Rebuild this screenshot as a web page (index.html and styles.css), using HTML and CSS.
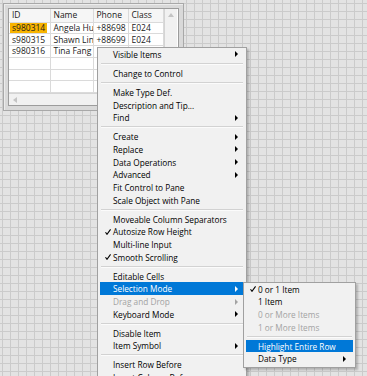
FILE: index.html
```html
<!DOCTYPE html>
<html lang="en">
<head>
  <meta charset="UTF-8" />
  <title>Table Context Menu</title>
  <link rel="stylesheet" href="styles.css">
</head>
<body>
  <div class="panel">
    <div class="table-frame">
      <div class="table-main">
        <table class="grid">
          <colgroup>
            <col class="c-id"><col class="c-name"><col class="c-phone"><col class="c-class">
          </colgroup>
          <thead>
            <tr><th>ID</th><th>Name</th><th>Phone</th><th>Class</th></tr>
          </thead>
          <tbody>
            <tr><td><span class="picked">s980314</span></td><td>Angela Hu</td><td>+88698</td><td>E024</td></tr>
            <tr><td>s980315</td><td>Shawn Lin</td><td>+88699</td><td>E024</td></tr>
            <tr><td>s980316</td><td>Tina Fang</td><td></td><td></td></tr>
            <tr><td></td><td></td><td></td><td></td></tr>
            <tr><td></td><td></td><td></td><td></td></tr>
            <tr><td></td><td></td><td></td><td></td></tr>
          </tbody>
        </table>
        <div class="vscroll"><i class="tri-up"></i></div>
      </div>
      <div class="hscroll"><i class="tri-left"></i></div>
    </div>
  </div>

  <div class="menu main-menu">
    <div class="item sub"><span class="mark"></span><span>Visible Items</span></div>
    <div class="sep"></div>
    <div class="item"><span class="mark"></span><span>Change to Control</span></div>
    <div class="sep"></div>
    <div class="item"><span class="mark"></span><span>Make Type Def.</span></div>
    <div class="item"><span class="mark"></span><span>Description and Tip...</span></div>
    <div class="item sub"><span class="mark"></span><span>Find</span></div>
    <div class="sep"></div>
    <div class="item sub"><span class="mark"></span><span>Create</span></div>
    <div class="item sub"><span class="mark"></span><span>Replace</span></div>
    <div class="item sub"><span class="mark"></span><span>Data Operations</span></div>
    <div class="item sub"><span class="mark"></span><span>Advanced</span></div>
    <div class="item"><span class="mark"></span><span>Fit Control to Pane</span></div>
    <div class="item"><span class="mark"></span><span>Scale Object with Pane</span></div>
    <div class="sep"></div>
    <div class="item"><span class="mark"></span><span>Moveable Column Separators</span></div>
    <div class="item"><span class="mark"><svg viewBox="0 0 6 6" width="6" height="6"><path d="M0.5 3.2 L2 5.3 L5.6 0.4" /></svg></span><span>Autosize Row Height</span></div>
    <div class="item"><span class="mark"></span><span>Multi-line Input</span></div>
    <div class="item"><span class="mark"><svg viewBox="0 0 6 6" width="6" height="6"><path d="M0.5 3.2 L2 5.3 L5.6 0.4" /></svg></span><span>Smooth Scrolling</span></div>
    <div class="sep"></div>
    <div class="item"><span class="mark"></span><span>Editable Cells</span></div>
    <div class="item sub active"><span class="mark"></span><span>Selection Mode</span></div>
    <div class="item sub disabled"><span class="mark"></span><span>Drag and Drop</span></div>
    <div class="item sub"><span class="mark"></span><span>Keyboard Mode</span></div>
    <div class="sep"></div>
    <div class="item"><span class="mark"></span><span>Disable Item</span></div>
    <div class="item sub"><span class="mark"></span><span>Item Symbol</span></div>
    <div class="sep"></div>
    <div class="item"><span class="mark"></span><span>Insert Row Before</span></div>
    <div class="item"><span class="mark"></span><span>Insert Column Before</span></div>
  </div>

  <div class="menu sub-menu">
    <div class="item"><span class="mark"><svg viewBox="0 0 6 6" width="6" height="6"><path d="M0.5 3.2 L2 5.3 L5.6 0.4" /></svg></span><span>0 or 1 Item</span></div>
    <div class="item"><span class="mark"></span><span>1 Item</span></div>
    <div class="item disabled"><span class="mark"></span><span>0 or More Items</span></div>
    <div class="item disabled"><span class="mark"></span><span>1 or More Items</span></div>
    <div class="sep"></div>
    <div class="item active"><span class="mark"></span><span>Highlight Entire Row</span></div>
    <div class="item sub"><span class="mark"></span><span>Data Type</span></div>
  </div>
</body>
</html>
```

FILE: styles.css
```css
html, body {
  margin: 0;
  height: 376px;
  overflow: hidden;
}
body {
  position: relative;
  padding: 3px;
  box-sizing: border-box;
  font-family: "Open Sans", "Liberation Sans", sans-serif;
  font-size: 8.25px;
  color: #111;
  background-color: #e3e3e3;
  background-image:
    linear-gradient(to right, #cbcbcb 1px, transparent 1px),
    linear-gradient(to bottom, #cbcbcb 1px, transparent 1px);
  background-size: 8px 8px;
  background-position: 2px 3px;
}

/* table control */
.panel {
  width: 181px;
  box-sizing: border-box;
  background: #d9d9d9;
  border: 1px solid #a8a8a8;
  padding: 4px;
  box-shadow: inset 1px 1px 0 #ececec;
}
.table-frame {
  border: 1px solid #9c9c9c;
  background: #fff;
}
.table-main {
  display: flex;
}
.grid {
  table-layout: fixed;
  border-collapse: collapse;
  width: 154px;
  font-size: 8.5px;
  color: #1a1a1a;
}
.c-id { width: 41px; }
.c-name { width: 43px; }
.c-phone { width: 35px; }
.c-class { width: 35px; }
.grid th, .grid td {
  padding: 0 0 0 3px;
  border: 1px solid #dadada;
  border-top: none;
  white-space: nowrap;
  overflow: hidden;
  text-align: left;
  font-weight: normal;
  line-height: 10px;
}
.grid th:first-child, .grid td:first-child { border-left: none; }
.grid th {
  height: 12.5px;
  background: #f6f6f6;
}
.grid td {
  height: 10.75px;
}
.picked {
  background: #f8b400;
  margin-left: -2px;
  padding: 1px 2px;
}
.vscroll {
  width: 12px;
  background: #f1f1f1;
  border-left: 1px solid #d4d4d4;
  display: flex;
  justify-content: center;
  padding-top: 4px;
}
.tri-up {
  width: 0;
  height: 0;
  border-left: 3px solid transparent;
  border-right: 3px solid transparent;
  border-bottom: 4px solid #c4c4c4;
}
.hscroll {
  height: 12px;
  background: #f1f1f1;
  border-top: 1px solid #d4d4d4;
  display: flex;
  align-items: center;
  padding-left: 4px;
  box-sizing: border-box;
}
.tri-left {
  width: 0;
  height: 0;
  border-top: 3px solid transparent;
  border-bottom: 3px solid transparent;
  border-right: 4px solid #c4c4c4;
}

/* context menus */
.menu {
  position: absolute;
  background: #f1f1f1;
  border: 1px solid #a0a0a0;
  box-shadow: 2px 2px 2px rgba(0, 0, 0, 0.22);
  box-sizing: border-box;
  color: #000;
}
.main-menu {
  left: 97px;
  top: 47px;
  width: 150px;
}
.sub-menu {
  left: 243px;
  top: 281.7px;
  width: 113px;
  padding-bottom: 2px;
}
.item {
  display: flex;
  align-items: center;
  height: 12.7px;
  margin: 0 2px;
  padding: 0 6px 0 5px;
  white-space: nowrap;
}
.sub-menu .item {
  padding-left: 4px;
  padding-right: 7px;
}
.mark {
  width: 8px;
  flex: none;
  display: flex;
  align-items: center;
}
.mark svg {
  fill: none;
  stroke: #000;
  stroke-width: 1.1;
}
.item.sub::after {
  content: "";
  margin-left: auto;
  width: 0;
  height: 0;
  border-top: 3px solid transparent;
  border-bottom: 3px solid transparent;
  border-left: 3px solid #000;
}
.item.active {
  background: #0078d7;
  color: #fff;
}
.item.active::after {
  border-left-color: #fff;
}
.item.disabled {
  color: #a3a3a3;
}
.item.disabled::after {
  border-left-color: #a3a3a3;
}
.sep {
  height: 6.3px;
  margin: 0 3px;
  display: flex;
  align-items: center;
}
.sep::before {
  content: "";
  flex: 1;
  border-top: 1px solid #d2d2d2;
  border-bottom: 1px solid #fbfbfb;
}
```
